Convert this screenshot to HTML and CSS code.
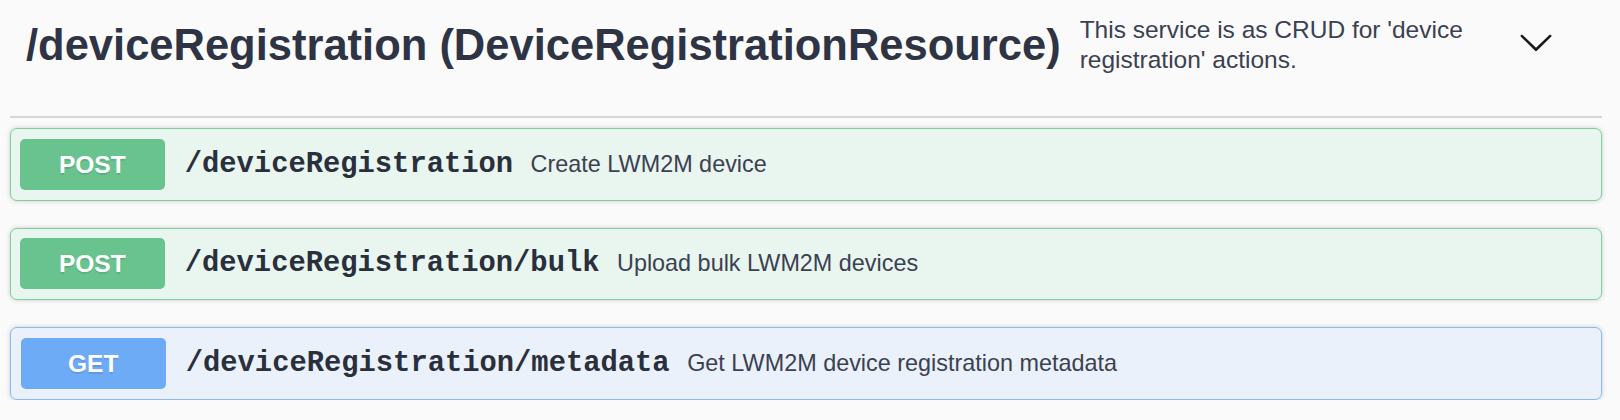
FILE: index.html
```html
<!DOCTYPE html>
<html lang="en">
<head>
<meta charset="utf-8">
<title>deviceRegistration</title>
<link rel="stylesheet" href="styles.css">
</head>
<body>
<div class="wrapper">
  <section class="tag-section">
    <h4 class="tag">
      <span class="tag-name">/deviceRegistration (DeviceRegistrationResource)</span>
      <small class="tag-desc">This service is as CRUD for 'device registration' actions.</small>
      <button class="expand" type="button" aria-label="Collapse">
        <svg class="arrow" viewBox="0 0 20 20" width="36" height="36" aria-hidden="true">
          <path d="M17.418 6.109c.272-.268.709-.268.979 0s.271.701 0 .969l-7.908 7.83c-.27.268-.707.268-.979 0l-7.908-7.83c-.27-.268-.27-.701 0-.969.271-.268.709-.268.979 0L10 13.25l7.418-7.141z"/>
        </svg>
      </button>
    </h4>
    <div class="ops">
      <div class="op op-post">
        <span class="method">POST</span>
        <span class="path">/deviceRegistration</span>
        <span class="summary">Create LWM2M device</span>
      </div>
      <div class="op op-post">
        <span class="method">POST</span>
        <span class="path">/deviceRegistration/bulk</span>
        <span class="summary">Upload bulk LWM2M devices</span>
      </div>
      <div class="op op-get">
        <span class="method">GET</span>
        <span class="path">/deviceRegistration/metadata</span>
        <span class="summary">Get LWM2M device registration metadata</span>
      </div>
    </div>
  </section>
</div>
</body>
</html>
```

FILE: styles.css
```css
* {
  box-sizing: border-box;
}

html, body {
  margin: 0;
  padding: 0;
  background: #fafafa;
}

body {
  font-family: "Liberation Sans", Arial, sans-serif;
  color: #3b4151;
}

.wrapper {
  padding: 0 18px 0 10px;
}

.tag {
  display: flex;
  align-items: center;
  margin: 0;
  padding: 15px 48px 41px 16px;
  border-bottom: 2px solid #d5d6da;
  font-weight: normal;
}

.tag-name {
  flex: none;
  font-size: 43.5px;
  font-weight: 700;
  line-height: 50px;
  color: #2f3444;
  white-space: nowrap;
}

.tag-desc {
  flex: 1;
  padding: 0 18px 0 19px;
  font-size: 24.5px;
  line-height: 30px;
  color: #3b4151;
}

.expand {
  flex: none;
  display: flex;
  padding: 0;
  margin: 0 0 6px 0;
  border: 0;
  background: none;
}

.arrow {
  display: block;
  fill: #1b1b1b;
}

.ops {
  display: flex;
  flex-direction: column;
  gap: 27px;
  padding-top: 10px;
}

.op {
  display: flex;
  align-items: center;
  height: 72.5px;
  padding: 0 8.75px;
  border: 1.75px solid;
  border-radius: 7px;
  box-shadow: 0 0 5px rgba(0, 0, 0, 0.19);
}

.op-post {
  background: #e9f5ef;
  border-color: #7fcf9e;
}

.op-get {
  background: #ebf1fa;
  border-color: #8ab9f5;
}

.method {
  flex: none;
  width: 145px;
  height: 51px;
  border-radius: 5px;
  color: #fff;
  font-size: 24.5px;
  font-weight: 700;
  line-height: 51px;
  text-align: center;
  text-shadow: 0 1.75px 0 rgba(0, 0, 0, 0.1);
}

.op-post .method {
  background: #68c38f;
}

.op-get .method {
  background: #6eabf6;
  margin-left: 1px;
}

.path {
  flex: none;
  padding: 0 17.5px 0 20px;
  font-family: "Liberation Mono", "Courier New", monospace;
  font-size: 28.8px;
  font-weight: 700;
  color: #2a2f3c;
}

.summary {
  flex: 1;
  font-size: 23.4px;
  color: #3b4151;
}
```
